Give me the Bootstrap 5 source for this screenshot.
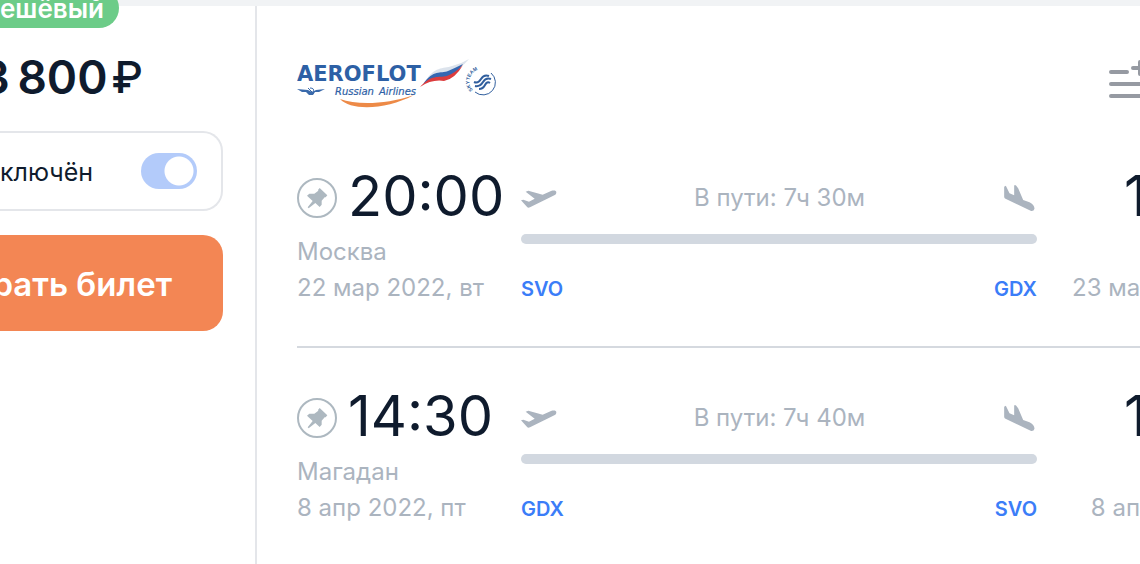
<!DOCTYPE html>
<html lang="ru">
<head>
<meta charset="utf-8">
<meta name="viewport" content="width=device-width, initial-scale=1">
<title>Авиабилеты</title>
<link href="https://cdn.jsdelivr.net/npm/bootstrap@5.3.0/dist/css/bootstrap.min.css" rel="stylesheet">
<style>
  :root { --ink: #0f1b2d; --muted: #abb4bf; --line: #e4e6ea; }
  body { font-family: Inter, "Liberation Sans", sans-serif; color: var(--ink); background: #fff; }
  .page-strip { height: 6px; background: #f1f3f5; }
  .ticket { min-height: calc(100vh - 6px); }
  .offer { width: 257px; border-right: 2px solid var(--line); padding-right: 32px; }
  .cheap { background: #6ccc88; color: #fff; font-size: 26px; line-height: 38px; font-weight: 600; border-radius: 0 20px 20px 0; padding: 2px 16px 0 0; margin: -18px 104px 0 0; }
  .price { font-size: 46px; line-height: 56px; font-weight: 600; gap: 4px; margin: 21px 80px 0 0; }
  .ruble { font-size: 44px; font-weight: 500; }
  .baggage { height: 80px; border: 2px solid var(--line); border-left: 0; border-radius: 0 20px 20px 0; margin-top: 26px; padding-right: 24px; font-size: 25px; }
  .baggage label { padding-top: 3px; }
  .baggage .form-check-input { width: 56px; height: 36px; border: 0; border-radius: 18px; background: #b3cbfa radial-gradient(circle at 38px 18px, #fff 14px, transparent 15px); }
  .choose { height: 96px; border-radius: 0 20px 20px 0; margin-top: 24px; padding: 3px 50px 0 0; background: #f38654; color: #fff; font-size: 33px; font-weight: 600; }
  .choose:hover { background: #ee7a47; color: #fff; }
  .flights { padding-left: 40px; }
  .airline { padding-top: 52px; height: 122px; }
  .leg { display: grid; grid-template-columns: 224px 1fr 103px; padding: 36px 0 40px; }
  .leg + .leg { border-top: 2px solid #d5d9df; }
  .clock { font-size: 56px; line-height: 64px; }
  .clock-row { gap: 11px; margin-bottom: 6px; }
  .place { font-size: 24px; line-height: 36px; color: var(--muted); }
  .pin { width: 40px; height: 40px; margin-top: 4px; }
  .route { padding-top: 14px; }
  .trip { height: 40px; font-size: 24px; color: var(--muted); }
  .track { height: 10px; border-radius: 5px; background: #d2d8e0; margin: 16px 0 28px; }
  .code { font-size: 20px; line-height: 34px; font-weight: 600; color: #3b7df8; }
  .arrival { padding-left: 35px; }
  .arrival .clock { padding-left: 52px; }
</style>
</head>
<body class="overflow-hidden">
<svg class="d-none">
  <symbol id="pin" viewBox="0 0 120 120"><circle cx="60" cy="60" r="57" fill="none" stroke="#adb8c0" stroke-width="6"/><path fill="#adb8c0" d="M63 36L68 30L91 52L86 58H83L74 68V80L68 87L55 75L35 91L32 88L47 69L30 53L37 47H52L64 38Z"/></symbol>
  <symbol id="takeoff" viewBox="2 -6 108 60"><path fill="#abb4bf" d="M2 31L9 29L26 35L43 26L16 5L24 2L67 14L92 3C100 1 108 1 108 7C108 12 106 14 102 16L29 52Q24 54 21 52Z"/></symbol>
  <symbol id="landing" viewBox="0 0 92 84"><path fill="#abb4bf" d="M0 8L5 5L16 28L30 34V4H35L42 13L57 48L76 55C85 60 91 66 91 74Q89 82 81 81L4 44Q0 42 0 38Z"/></symbol>
</svg>
<div class="page-strip"></div>
<div class="ticket d-flex">
  <aside class="offer flex-shrink-0">
    <div class="cheap text-end text-nowrap">ешёвый</div>
    <div class="price d-flex justify-content-end text-nowrap"><span>3&#8201;800</span><span class="ruble">₽</span></div>
    <div class="baggage d-flex align-items-center justify-content-between">
      <label for="bag">ключён</label>
      <input class="form-check-input m-0" type="checkbox" role="switch" id="bag" checked>
    </div>
    <button class="choose btn w-100 d-flex align-items-center justify-content-end text-nowrap" type="button">рать билет</button>
  </aside>
  <main class="flights flex-grow-1">
    <header class="airline d-flex justify-content-between align-items-start">
      <svg width="200" height="52" viewBox="297 58 200 52" role="img" aria-label="Aeroflot">
        <text x="297" y="81" font-family="DejaVu Sans" font-weight="700" font-size="21" fill="#2d60a5">AEROFLOT</text>
        <g font-family="DejaVu Sans" font-style="italic" font-size="10" fill="#2d60a5" stroke="#2d60a5" stroke-width=".2"><text x="335" y="95">Russian</text><text x="379" y="95">Airlines</text></g>
        <path fill="#3a6aab" d="M297 89L308 90L312 92L316 90L325 89L319 92H315L313 95H309L306 92H302Z"/><path d="M310 88Q315 88 313 92M308 88L314 94" fill="none" stroke="#3a6aab"/>
        <path fill="#ed8a47" d="M340 99C357 105 384 105 414 95C386 110 351 111 340 99Z"/>
        <path fill="#dce3ec" d="M425 82C434 66 443 69 452 66Q461 64 469 59Q461 69 450 71Q435 72 425 82Z"/>
        <path fill="#3667b1" d="M423 84C434 69 440 74 448 71Q455 68 463 64Q457 74 448 77Q433 76 423 84Z"/>
        <path fill="#dc3c3d" d="M420 87C432 74 438 78 447 76Q455 73 463 65Q455 79 444 81Q432 79 420 87Z"/>
        <g fill="none" stroke="#315f9e"><path d="M491 73A12 12 0 0 1 475 92"/><path stroke-width="2" d="M474 82Q478 84 481 79T489 76M475 86Q480 87 483 82T491 79M479 89Q483 89 485 85T490 83"/></g>
        <path id="ring" fill="none" d="M473 90A11 11 0 0 1 490 73"/>
        <text font-family="Liberation Sans" font-weight="700" font-size="5" fill="#315f9e"><textPath href="#ring">SKYTEAM</textPath></text>
      </svg>
      <button class="btn p-0 border-0 lh-1" type="button" aria-label="Добавить фильтр">
        <svg width="31" height="44" viewBox="0 0 31 44" fill="none" stroke="#969aa2" stroke-width="4" stroke-linecap="round"><path d="M2 14H18M2 26H31M2 38H31M24 10H31M31 4V16"/></svg>
      </button>
    </header>
    <section class="leg">
      <div>
        <div class="clock-row d-flex align-items-center"><svg class="pin"><use href="#pin"/></svg><div class="clock">20:00</div></div>
        <div class="place">Москва</div><div class="place">22 мар 2022, вт</div>
      </div>
      <div class="route">
        <div class="trip d-flex align-items-center justify-content-between"><svg width="36" height="20"><use href="#takeoff"/></svg><span>В пути: 7ч 30м</span><svg width="35" height="28"><use href="#landing"/></svg></div>
        <div class="track"></div>
        <div class="code d-flex justify-content-between"><span>SVO</span><span>GDX</span></div>
      </div>
      <div class="arrival text-nowrap"><div class="clock-row"><div class="clock">1</div></div><div class="place">&nbsp;</div><div class="place">23 ма</div></div>
    </section>
    <section class="leg">
      <div>
        <div class="clock-row d-flex align-items-center"><svg class="pin"><use href="#pin"/></svg><div class="clock">14:30</div></div>
        <div class="place">Магадан</div><div class="place">8 апр 2022, пт</div>
      </div>
      <div class="route">
        <div class="trip d-flex align-items-center justify-content-between"><svg width="36" height="20"><use href="#takeoff"/></svg><span>В пути: 7ч 40м</span><svg width="35" height="28"><use href="#landing"/></svg></div>
        <div class="track"></div>
        <div class="code d-flex justify-content-between"><span>GDX</span><span>SVO</span></div>
      </div>
      <div class="arrival text-nowrap"><div class="clock-row"><div class="clock">1</div></div><div class="place">&nbsp;</div><div class="place text-end">8 ап</div></div>
    </section>
  </main>
</div>
<script src="https://cdn.jsdelivr.net/npm/bootstrap@5.3.0/dist/js/bootstrap.bundle.min.js"></script>
</body>
</html>
